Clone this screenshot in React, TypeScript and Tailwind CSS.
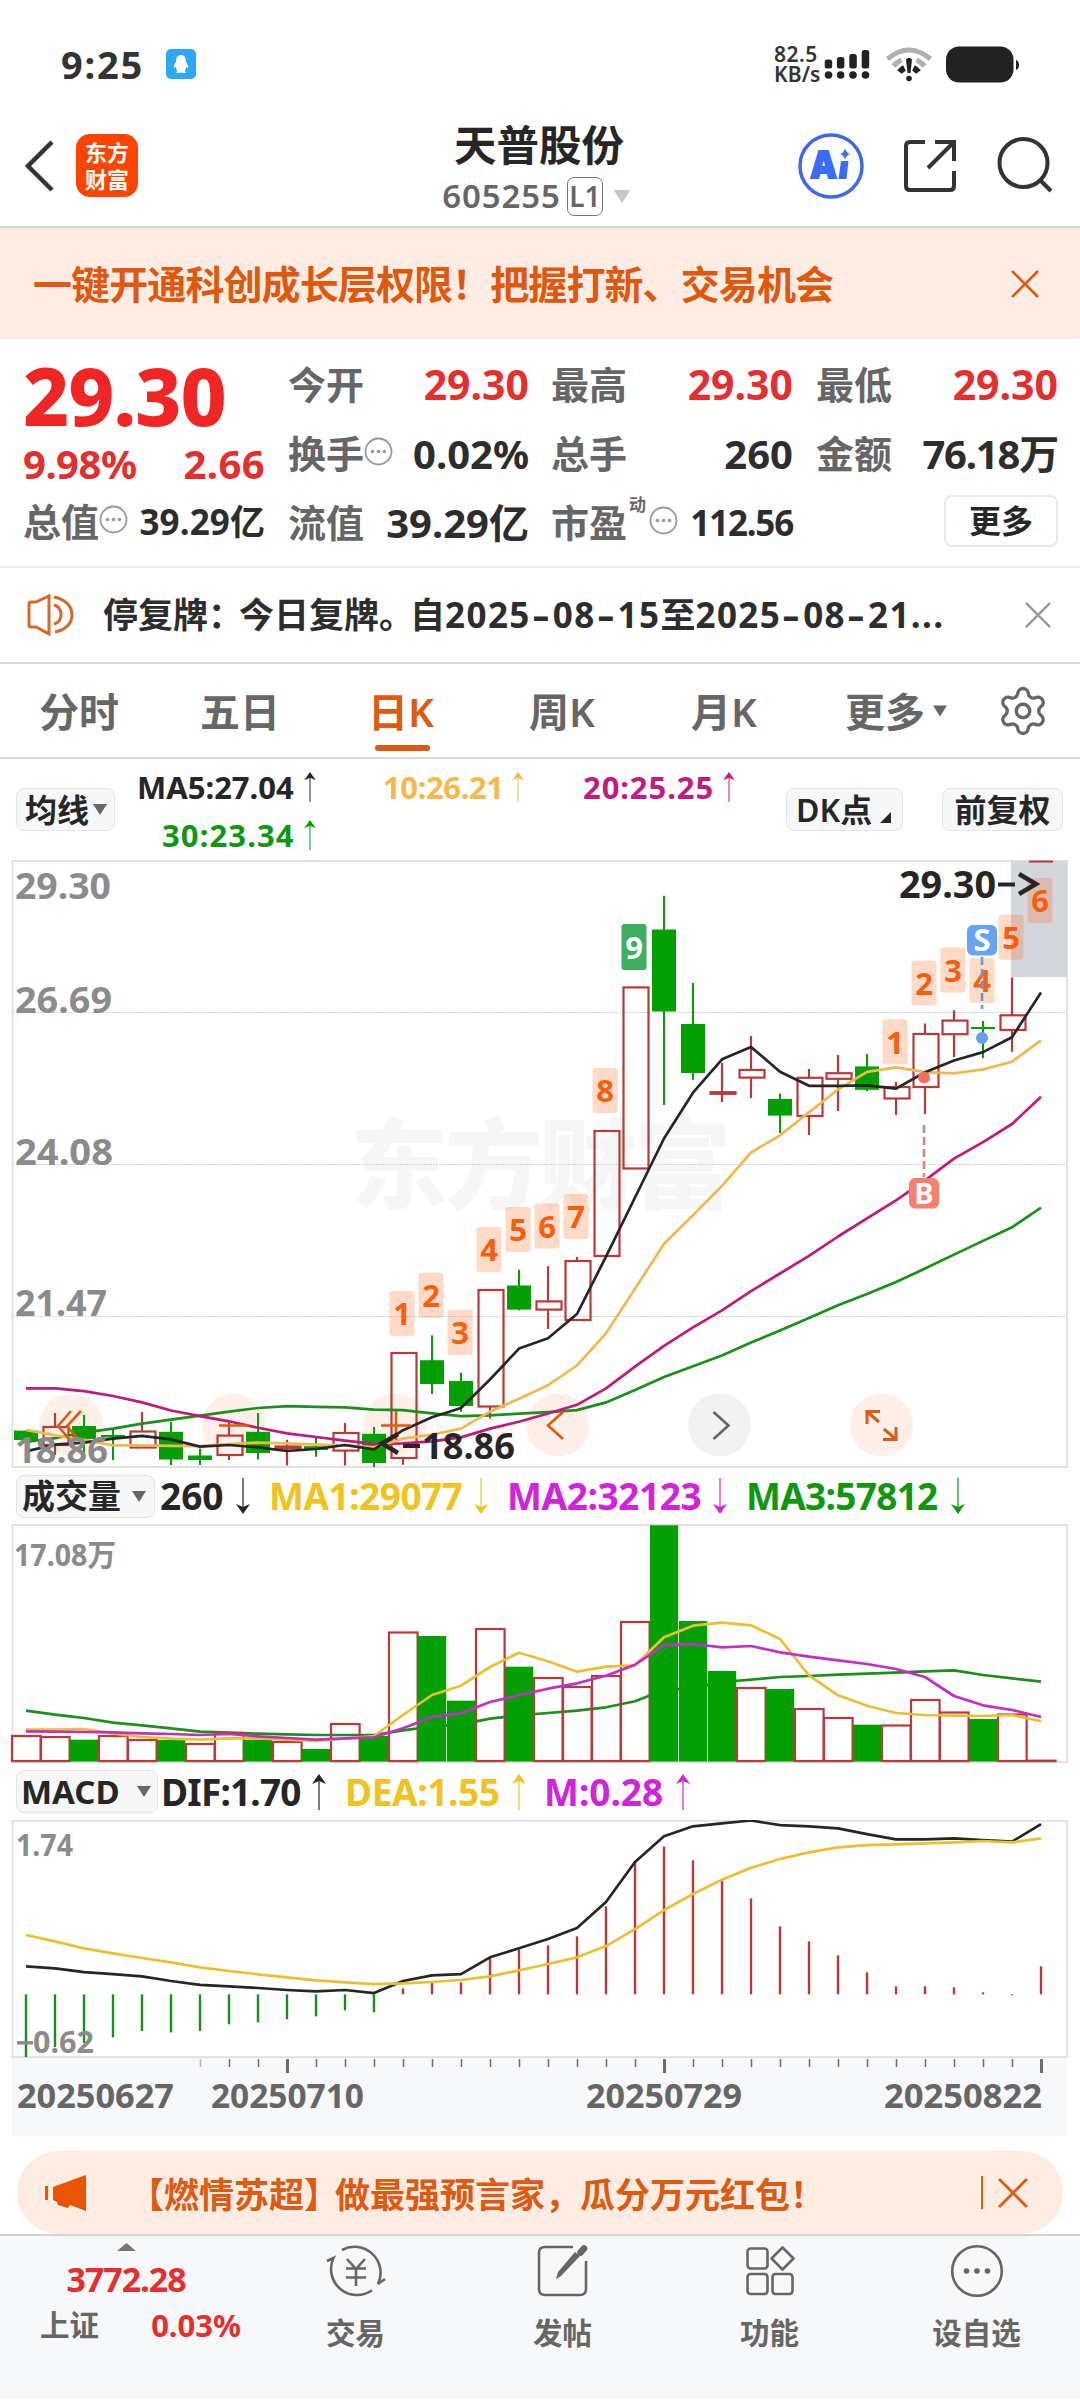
import type { ReactNode } from "react";
import { Settings } from "lucide-react";

const RED = "#b93a38";
const GREEN = "#02a002";

// x centre of the n-th trading day
const cx = (i: number) => 26 + i * 29;

const toPoints = (ys: number[]) => ys.map((y, i) => `${cx(i)},${y}`).join(" ");

// [up, high, body top, body bottom, low]
const candles: [number, number, number, number, number][] = [
  [0, 1430.6, 1430.6, 1440, 1440],
  [1, 1413, 1427, 1445, 1455],
  [0, 1415, 1426, 1439, 1455],
  [0, 1428.5, 1435, 1437.5, 1460],
  [1, 1412, 1431.5, 1447.5, 1447.5],
  [0, 1422, 1431.8, 1459.5, 1465],
  [0, 1448.6, 1455.5, 1460, 1465],
  [1, 1420.5, 1435.6, 1455, 1460],
  [0, 1413, 1431.8, 1453, 1459.5],
  [1, 1439.8, 1446.5, 1448.3, 1465.5],
  [0, 1437.4, 1446.2, 1450, 1456.7],
  [1, 1423, 1433, 1450.6, 1465.5],
  [0, 1427, 1433.8, 1463, 1467],
  [1, 1353, 1353, 1458, 1464.7],
  [0, 1335.3, 1360.2, 1384, 1394],
  [0, 1372.7, 1381, 1406, 1411.7],
  [1, 1290, 1290, 1406.5, 1418.5],
  [0, 1269.8, 1285.5, 1309.6, 1310.4],
  [1, 1266.2, 1301.4, 1309.6, 1329],
  [1, 1257, 1261, 1320, 1320],
  [1, 1131, 1131, 1256, 1256],
  [1, 987.4, 987.4, 1168.5, 1168.5],
  [0, 895.8, 929.5, 1011.5, 1105],
  [0, 983, 1024, 1073, 1079.8],
  [1, 1063, 1092.2, 1093.8, 1102],
  [1, 1036, 1070, 1077.6, 1098],
  [0, 1093.5, 1099, 1115.6, 1133],
  [1, 1069, 1077.8, 1116, 1135],
  [1, 1055, 1073.2, 1078.8, 1111],
  [0, 1054, 1066.4, 1089.8, 1091],
  [1, 1081.8, 1087, 1098.5, 1115],
  [1, 1023.6, 1034, 1087, 1114],
  [1, 1010.3, 1020.6, 1034.2, 1057],
  [0, 1021, 1027, 1029, 1058],
  [1, 977.4, 1015.3, 1030, 1051.7],
];

const ma5 = [1451.4, 1444.6, 1442.6, 1438.6, 1435.8, 1439.4, 1446.6, 1445, 1447.4, 1451, 1449, 1445, 1449.4, 1430.2, 1417.3, 1408, 1379.5, 1348.6, 1338.2, 1314, 1256.6, 1197.5, 1138.5, 1092.7, 1059.3, 1046.9, 1071.8, 1085.8, 1085.8, 1085.4, 1088.6, 1072.2, 1060.5, 1052.1, 1037.2, 992.6];
const ma10 = [1429.8, 1435.4, 1439.8, 1445.4, 1445.4, 1445.8, 1446.2, 1444.2, 1442.6, 1443.4, 1444.6, 1445.4, 1447.4, 1438.6, 1434.6, 1428.6, 1411.7, 1398.8, 1385.2, 1365.5, 1333.3, 1288.7, 1243.7, 1215.2, 1185.9, 1152.5, 1135.3, 1112.4, 1089.5, 1071.8, 1067.4, 1072.2, 1073.4, 1069.4, 1061.7, 1040.4];
const ma20 = [1388.4, 1388.4, 1391.2, 1396, 1402.4, 1410.5, 1416.1, 1421.3, 1427.7, 1433.4, 1437, 1440.6, 1443.8, 1443.4, 1441.4, 1437.4, 1428.6, 1421.7, 1413.5, 1404.8, 1388.4, 1366.7, 1345.8, 1327.3, 1310.4, 1291.1, 1273.5, 1255.8, 1236.5, 1218.4, 1200.3, 1180.3, 1158.6, 1142.1, 1124, 1096.7];
const ma30 = [1442, 1438.2, 1432.6, 1428.6, 1423.7, 1419.7, 1415.7, 1411.7, 1408, 1406.1, 1406.9, 1407.3, 1409.7, 1410.1, 1413.3, 1416.1, 1415.3, 1413.7, 1412.1, 1410.1, 1402.4, 1390, 1377.1, 1366.3, 1355.4, 1342.6, 1330.5, 1318.1, 1305.2, 1294, 1281.9, 1268.6, 1254.6, 1240.9, 1227.3, 1207.6];

// [x centre, top, label]
const tags: [number, number, string][] = [
  [402, 1291, "1"],
  [431, 1272.7, "2"],
  [460, 1310, "3"],
  [489, 1227, "4"],
  [518, 1207, "5"],
  [547, 1203.6, "6"],
  [576, 1194, "7"],
  [605, 1068, "8"],
  [895, 1019.5, "1"],
  [924, 960.5, "2"],
  [953, 947.6, "3"],
  [982, 958, "4"],
  [1011, 914.7, "5"],
  [1040, 878, "6"],
];

// [up, top]
const volumes: [number, number][] = [
  [1, 1736], [1, 1737], [0, 1739.7], [1, 1736], [1, 1740], [0, 1740], [1, 1744], [1, 1733], [0, 1739.7],
  [1, 1742], [0, 1749], [1, 1724], [0, 1736], [1, 1632.5], [0, 1636], [0, 1700.7], [1, 1629], [0, 1666.7],
  [1, 1678], [1, 1687], [1, 1676], [1, 1622], [0, 1525.3], [0, 1621], [0, 1671], [1, 1688], [0, 1689],
  [1, 1709], [1, 1718], [0, 1724.7], [1, 1725.5], [1, 1700], [1, 1712.5], [0, 1719], [1, 1714.5], [1, 1760.7],
];
const vma1 = [1729.7, 1729.7, 1729, 1733.3, 1737, 1738.7, 1739.7, 1738.3, 1738.3, 1739.7, 1741, 1738.7, 1736, 1715, 1695, 1685.7, 1667, 1652.7, 1661.3, 1671.7, 1666.7, 1665.3, 1637.3, 1625.7, 1622.7, 1625.3, 1639, 1675.3, 1695.3, 1705.7, 1713, 1715, 1715.7, 1716, 1715, 1721.3];
const vma2 = [1731.3, 1731.7, 1732, 1732.3, 1733.3, 1734, 1735, 1734, 1736.3, 1738, 1739.7, 1738.3, 1737.3, 1728.3, 1717, 1713.3, 1702, 1695.3, 1688.7, 1683.3, 1675.7, 1664.7, 1645.3, 1644, 1647.3, 1646, 1652.3, 1656.7, 1660.3, 1664, 1669, 1677, 1696, 1705.3, 1710, 1717];
const vma3 = [1710.7, 1714.7, 1718, 1722.7, 1725.3, 1728.3, 1731.7, 1732.7, 1733.7, 1734.3, 1735, 1735, 1735, 1730.3, 1726.7, 1724.3, 1718.7, 1715.3, 1713, 1710.7, 1707.3, 1701.3, 1690, 1688, 1682, 1679.7, 1677, 1676, 1674.7, 1673.7, 1672.7, 1671.3, 1670.3, 1675, 1678.3, 1681.7];

const MACD_ZERO = 1996.5;
const macd = [2060, 2049.8, 2045.7, 2040, 2033.6, 2035, 2033.6, 2026.8, 2024.8, 2021.8, 2018.8, 2012.7, 2014.7, 1990.5, 1984, 1984.4, 1959.8, 1951, 1947, 1937.9, 1907.6, 1862, 1847, 1861, 1882, 1899.5, 1927.8, 1943, 1957, 1974.3, 1988.4, 1988.4, 1989.4, 1994.5, 1997.4, 1968.2];
const dif = [1968.2, 1970.2, 1974, 1976, 1978.3, 1983, 1987, 1988.4, 1990.1, 1992.1, 1993.5, 1992.1, 1995.2, 1983, 1977.3, 1976, 1959.1, 1950, 1940.6, 1929.5, 1903.2, 1862.8, 1836.8, 1826.7, 1823.7, 1820.8, 1825.4, 1826.7, 1828.7, 1834.5, 1839.9, 1839.9, 1838.8, 1840.5, 1842.2, 1824.4];
const dea = [1936.5, 1943, 1950, 1955.1, 1959.8, 1964.2, 1969.2, 1972.9, 1976.3, 1979.3, 1982.4, 1984.4, 1986.1, 1985.4, 1984, 1982, 1978.3, 1972.3, 1965.9, 1959.1, 1947.7, 1930.5, 1911.3, 1895.1, 1880.6, 1868.5, 1859.7, 1853, 1847.9, 1845.6, 1844.9, 1843.9, 1842.9, 1841.5, 1842.9, 1838.8];

function Line({ ys, color }: { ys: number[]; color: string }) {
  return <polyline points={toPoints(ys)} fill="none" stroke={color} strokeWidth="2.7" strokeLinejoin="round" />;
}

function Label({ x, y, w, size, fill = "#8b8b8b", children }: { x: number; y: number; w: number; size: number; fill?: string; children: string }) {
  return (
    <text x={x} y={y} textLength={w} lengthAdjust="spacingAndGlyphs" fontSize={size} fill={fill}>
      {children}
    </text>
  );
}

function Caret({ className }: { className: string }) {
  return (
    <svg viewBox="0 0 14 11" className={className} fill="currentColor">
      <path d="M0 0H14L7 11Z" />
    </svg>
  );
}

function Arrow({ down, className = "" }: { down?: boolean; className?: string }) {
  return (
    <svg viewBox="0 0 14 36" className={`shrink-0 ${down ? "rotate-180" : ""} ${className}`}>
      <path d="M7 5V36" stroke="currentColor" strokeWidth="1.6" opacity="0.75" />
      <path d="M7 0L14 10L7 7L0 10Z" fill="currentColor" />
    </svg>
  );
}

function Cross({ size, className = "" }: { size: number; className?: string }) {
  return (
    <svg width={size} height={size} viewBox="0 0 28 28" className={className} fill="none" stroke="currentColor" strokeWidth="2.6">
      <path d="M1 1L27 27M27 1L1 27" />
    </svg>
  );
}

function Info() {
  return (
    <svg width="29" height="29" viewBox="0 0 29 29" className="-mt-1 shrink-0">
      <circle cx="14.5" cy="14.5" r="13" fill="none" stroke="#999" strokeWidth="1.8" />
      <g fill="#999">
        <circle cx="8.5" cy="14.5" r="1.8" />
        <circle cx="14.5" cy="14.5" r="1.8" />
        <circle cx="20.5" cy="14.5" r="1.8" />
      </g>
    </svg>
  );
}

function Cell({ label, value, info, sup, valueClass }: { label: string; value: string; info?: boolean; sup?: string; valueClass: string }) {
  return (
    <div className="flex h-[69px] items-center justify-between">
      <div className="flex items-center text-[38px] font-semibold leading-[69px] text-[#666]">
        {label}
        {sup && <span className="-mt-9 ml-0.5 w-5 text-[17px] leading-5">{sup}</span>}
        {info && <Info />}
      </div>
      <span className={`whitespace-nowrap font-bold leading-[69px] ${valueClass}`}>{value}</span>
    </div>
  );
}

const UP = "text-[41px] text-[#e62e2e]";
const PLAIN = "text-[40px] text-[#2d2d2d]";

function StatusBar() {
  return (
    <div className="flex h-[110px] items-start text-[#333]">
      <span className="ml-[61px] mt-[43px] w-[105px] text-[38px] font-bold leading-[42px] tracking-[1.8px]">9:25</span>
      <svg width="30" height="30" viewBox="0 0 30 30" className="mt-[49px]">
        <rect width="30" height="30" rx="5" fill="#2ba7fb" />
        <path d="M15 6C10.5 6 10 10 10 13C8.5 15 7.5 17 8 19L10 18C10 20 11 21 11 22L10 24H14L15 23L16 24H20L19 22C19 21 20 20 20 18L22 19C22.5 17 21.5 15 20 13C20 10 19.5 6 15 6Z" fill="#fff" />
      </svg>
      <div className="ml-[578px] mt-[44px] w-[48px] text-[21px] font-semibold leading-[20px]">
        <div className="tracking-[0.5px]">82.5</div>
        <div className="tracking-[0.1px]">KB/s</div>
      </div>
      <svg width="200" height="40" viewBox="822 45 200 40" className="mt-[45px]" fill="#222">
        <rect x="824.7" y="59.5" width="7.5" height="9" rx="2.5" />
        <rect x="836.9" y="57" width="7.5" height="11.5" rx="2.5" />
        <rect x="849.3" y="54" width="7.5" height="14.5" rx="2.5" />
        <rect x="861.7" y="50" width="7.5" height="18.5" rx="2.5" />
        <circle cx="828.5" cy="75" r="3.8" />
        <circle cx="840.6" cy="75" r="3.8" />
        <circle cx="853" cy="75" r="3.8" />
        <circle cx="865.5" cy="75" r="3.8" />
        <g fill="none" strokeWidth="5">
          <path d="M887.5 59Q909 41 930.5 59" stroke="#b0b0b0" />
          <path d="M893.5 66Q897 62 901.5 60M916.5 60Q921 62 924.5 66" stroke="#b0b0b0" />
          <path d="M899.5 72Q901.5 69.5 904.5 68M913.5 68Q916.5 69.5 918.5 72" stroke="#222" strokeWidth="6" />
        </g>
        <path d="M906 59.5Q909 56 912 59.5L910.5 73H907.5Z" />
        <circle cx="909" cy="78.5" r="2.8" />
        <rect x="946" y="46.5" width="67.5" height="36" rx="13" />
        <path d="M1016 60Q1019 61 1019 65T1016 70Z" />
      </svg>
    </div>
  );
}

function Header() {
  return (
    <div className="flex h-[118px] border-b-2 border-[#d6d6d8]">
      <svg width="30" height="52" viewBox="0 0 30 52" className="ml-[24px] mt-[30px]" fill="none" stroke="#333" strokeWidth="4.5">
        <path d="M28 2L4 26L28 50" />
      </svg>
      <div className="ml-[22px] mt-[24px] flex h-[63px] w-[62px] flex-col items-center justify-center rounded-[14px] bg-[#ff4400] text-[22px] font-bold leading-[27px] text-white">
        <span>东方</span>
        <span>财富</span>
      </div>
      <div className="ml-[261px] mt-[9px] flex w-[280px] flex-col items-center">
        <h1 className="text-[42.5px] font-bold leading-[52px] text-[#262626]">天普股份</h1>
        <div className="mt-[5px] flex h-[40px] items-center text-[#666]">
          <span className="-ml-[4px] text-[33px] font-semibold leading-[40px] tracking-[0.9px]">605255</span>
          <span className="ml-[6px] flex h-[39px] w-[36px] items-center justify-center rounded-[7px] border-[1.5px] border-[#777] text-[28px] font-semibold leading-[36px]">L1</span>
          <Caret className="ml-[9px] h-[13px] w-[20px] text-[#c8c8c8]" />
        </div>
      </div>
      <svg width="266" height="70" viewBox="794 130 266 70" className="ml-[115px] mt-[20px]" fill="none" stroke="#333" strokeWidth="4">
        <circle cx="831" cy="166" r="31" stroke="#4169e1" strokeWidth="3.5" />
        <text x="811" y="177.5" fontSize="37" fontWeight="900" textLength="25" lengthAdjust="spacingAndGlyphs" fill="#3b6cf8" stroke="#3b6cf8" strokeWidth="2">A</text>
        <path d="M841 161H848.5L846.5 179H838.5Z" fill="#3b6cf8" stroke="none" />
        <path d="M845 148Q846 153 850 154Q846 155 845 160Q844 155 840 154Q844 153 845 148Z" fill="#3b6cf8" stroke="none" />
        <path d="M925 142H910Q906 142 906 146V186Q906 190 910 190H950Q954 190 954 186V171" />
        <path d="M935 142H954V161M954 142L928 168" />
        <circle cx="1023.5" cy="163" r="24" />
        <path d="M1040 180L1051 191" />
      </svg>
    </div>
  );
}

function Quote() {
  return (
    <div className="flex h-[229px] border-b-2 border-[#eee] pl-[23px]">
      <div className="w-[242px] pt-[21px]">
        <div className="text-[80px] font-extrabold leading-[70px] tracking-[-1px] text-[#f22525]">29.30</div>
        <div className="flex h-[67px] justify-between text-[40px] font-bold leading-[67px] text-[#e62e2e]">
          <span className="tracking-[-0.5px]">9.98%</span>
          <span className="tracking-[0.4px]">2.66</span>
        </div>
        <div className="-mt-[10px]">
          <Cell label="总值" value="39.29亿" info valueClass="text-[35px] text-[#2d2d2d] tracking-[0.1px]" />
        </div>
      </div>
      <div className="ml-[23px] w-[241px] pt-[11px]">
        <Cell label="今开" value="29.30" valueClass={UP} />
        <Cell label="换手" value="0.02%" info valueClass={PLAIN} />
        <Cell label="流值" value="39.29亿" valueClass={PLAIN} />
      </div>
      <div className="ml-[22px] w-[242px] pt-[11px]">
        <Cell label="最高" value="29.30" valueClass={UP} />
        <Cell label="总手" value="260" valueClass={PLAIN} />
        <Cell label="市盈" value="112.56" sup="动" info valueClass="text-[35px] text-[#2d2d2d] tracking-[-1.2px]" />
      </div>
      <div className="ml-[23px] w-[242px] pt-[11px]">
        <Cell label="最低" value="29.30" valueClass={UP} />
        <Cell label="金额" value="76.18万" valueClass="text-[40px] text-[#2d2d2d] tracking-[-1.2px]" />
        <div className="ml-auto mt-[7px] flex h-[52px] w-[114px] items-center justify-center rounded-lg border-2 border-[#e8e8e8] text-[32px] font-semibold text-[#262626]">更多</div>
      </div>
    </div>
  );
}

function Dash() {
  return <span className="inline-block w-[22px] scale-x-150 text-center">-</span>;
}

function Notice() {
  return (
    <div className="flex h-[96px] items-center border-b-2 border-[#d9d9db] pl-[27px] text-[#2d2d2d]">
      <svg width="48" height="42" viewBox="0 0 48 42" fill="none" stroke="#d4692a" strokeWidth="3">
        <path d="M2 10Q2 8 4 8H9L22 2V40L9 33H4Q2 33 2 31Z" />
        <path d="M27 11Q34 13 34 20.5Q34 28 27 30M27 3C38 5 45 12 45 21S38 36 28 38" />
      </svg>
      <div className="ml-[28px] w-[922px] whitespace-nowrap text-[35px] font-bold leading-[44px]">
        停复牌<span className="-mr-[4px]">：</span>今日复牌<span className="-mr-[4px]">。</span>自
        <span className="tracking-[1.4px]">2025<Dash />08<Dash />15</span>至<span className="tracking-[1.4px]">2025<Dash />08<Dash />21...</span>
      </div>
      <Cross size={26} className="text-[#999]" />
    </div>
  );
}

function Tabs() {
  return (
    <div className="flex h-[95px] items-start border-b-2 border-[#d9d9db] pt-[24px] text-[40px] font-semibold leading-[48px] text-[#666]">
      <span className="ml-[39px] w-[161px]">分时</span>
      <span className="w-[168px]">五日</span>
      <div className="flex w-[161px] flex-col text-[#dd5a10]">
        <span>日K</span>
        <span className="ml-[7px] mt-[9px] h-[6px] w-[55px] rounded-full bg-[#dd5a10]" />
      </div>
      <span className="w-[162px]">周K</span>
      <span className="w-[154px]">月K</span>
      <span>更多</span>
      <Caret className="ml-[8px] mt-[17px] h-[12px] w-[14px]" />
      <Settings size={54} strokeWidth={1.5} className="-mt-[4px] ml-[49px]" />
    </div>
  );
}

function Pill({ className, children }: { className: string; children: ReactNode }) {
  return (
    <div className={`flex h-[43px] shrink-0 items-center whitespace-nowrap rounded-[8px] border-[1.5px] border-[#e2e4e7] bg-[#f6f7f9] font-semibold leading-[40px] text-[#262626] ${className}`}>
      {children}
    </div>
  );
}

function MaLegend() {
  return (
    <div className="flex h-[101px] text-[31px] font-bold leading-[40px]">
      <Pill className="ml-[16px] mt-[29px] w-[99px] pl-[8px] text-[32px]">
        均线
        <Caret className="ml-[4px] h-[11px] w-[14px] text-[#666]" />
      </Pill>
      <div className="ml-[22px] mt-[8px] w-[650px]">
        <div className="flex h-[48px]">
          <div className="flex w-[246px] text-[#262626]">
            <span className="w-[167px]">MA5:27.04</span>
            <Arrow className="mt-[5px] h-[30px] w-[12px]" />
          </div>
          <div className="flex w-[200px] text-[#f3ba4b]">
            <span className="w-[129px] tracking-[-0.4px]">10:26.21</span>
            <Arrow className="mt-[5px] h-[30px] w-[12px]" />
          </div>
          <div className="flex text-[#c4197f]">
            <span className="w-[140px] tracking-[0.9px]">20:25.25</span>
            <Arrow className="mt-[5px] h-[30px] w-[12px]" />
          </div>
        </div>
        <div className="flex pl-[25px] text-[#0f980f]">
          <span className="w-[142px] tracking-[1.1px]">30:23.34</span>
          <Arrow className="mt-[5px] h-[30px] w-[12px]" />
        </div>
      </div>
      <Pill className="-ml-[1px] mt-[29px] w-[117px] pl-[9px] text-[32px]">
        DK点
        <svg viewBox="0 0 11 11" className="ml-[8px] mt-[16px] h-[11px] w-[11px]">
          <path d="M11 0V11H0Z" fill="#262626" />
        </svg>
      </Pill>
      <Pill className="ml-[39px] mt-[29px] w-[121px] justify-center text-[32px]">前复权</Pill>
    </div>
  );
}

function PriceChart() {
  return (
    <svg width="1080" height="608" viewBox="0 860 1080 608" className="block font-bold">
      <g fill="#f6f6f6" fontSize="98" fontWeight="900">
        <text x="350" y="1201" textLength="382">东方财富</text>
      </g>
      <path d="M13 1012.5H1067M13 1164.5H1067M13 1316.5H1067" stroke="#d4d4d4" strokeWidth="1" strokeDasharray="2 1" />
      <rect x="12.5" y="861" width="1054.5" height="606" fill="none" stroke="#e1e1e1" strokeWidth="2" />
      <rect x="1011" y="861" width="56" height="116" fill="#d3d6db" />
      <path d="M1029 861.5H1053" stroke={RED} strokeWidth="2" />

      {[71.5, 233.5, 395, 558, 881.5].map((x) => (
        <circle key={x} cx={x} cy="1425" r="31.5" fill="#fef0e8" />
      ))}
      <circle cx="719.5" cy="1425" r="31.5" fill="#f2f2f2" />

      {candles.map(([up, high, top, bottom, low], i) =>
        up ? (
          <g key={i} stroke={RED} strokeWidth="2.2">
            <path d={`M${cx(i)} ${high}V${top}M${cx(i)} ${bottom}V${low}`} />
            <rect x={cx(i) - 11.5} y={top} width="25" height={bottom - top} fill="none" />
          </g>
        ) : (
          <g key={i} fill={GREEN}>
            <rect x={cx(i) - 1} y={high} width="2" height={low - high} />
            <rect x={cx(i) - 12} y={top} width="24" height={bottom - top} />
          </g>
        ),
      )}

      {tags.map(([x, y, n]) => (
        <g key={x}>
          <rect x={x - 12.5} y={y} width="25" height="45" rx="3" fill="#fa6a20" fillOpacity="0.25" />
          <text x={x} y={y + 34} fontSize="31" textAnchor="middle" fill="#f95d0d">{n}</text>
        </g>
      ))}
      <rect x="621.5" y="924" width="25" height="46" rx="3" fill="#3eae62" />
      <text x="634" y="959" fontSize="31" textAnchor="middle" fill="#fff">9</text>

      <Line ys={ma30} color="#1b8f1b" />
      <Line ys={ma20} color="#bd1a7c" />
      <Line ys={ma10} color="#f0b94f" />
      <Line ys={ma5} color="#262626" />

      <path d="M982 957V1009" stroke="#6897df" strokeWidth="2.6" strokeDasharray="8 4" />
      <circle cx="982" cy="1038" r="6" fill="#5fa2f0" />
      <rect x="967" y="925" width="30" height="30.5" rx="6" fill="#66a3f7" />
      <text x="982" y="951" fontSize="31" textAnchor="middle" fill="#fff">S</text>
      <path d="M924 1125V1177" stroke="#dd8478" strokeWidth="2.6" strokeDasharray="8 4" />
      <circle cx="924" cy="1077.5" r="6" fill="#fa6e5c" />
      <rect x="909" y="1178" width="30" height="30.5" rx="6" fill="#fa7f6d" />
      <text x="924" y="1203.5" fontSize="29" textAnchor="middle" fill="#fff">B</text>

      <g fill="none" stroke="#dd5a10" strokeWidth="2.6">
        <path d="M71 1411L58 1426L70 1440M81 1411L67 1426L79 1440" />
        <path d="M219 1425.5H249M381 1425.5H411M396 1411V1440" />
        <path d="M563 1412L548 1425.5L563 1439" />
        <path d="M879 1422L867 1411.5M867 1424V1411.5H880M884 1429L896 1439.5M896 1427V1439.5H883" strokeWidth="3" />
      </g>
      <path d="M713.5 1412L728.5 1425.5L713.5 1439" fill="none" stroke="#666" strokeWidth="2.6" />

      <Label x={15} y={899} w={96} size={36}>29.30</Label>
      <Label x={15} y={1013} w={97} size={36}>26.69</Label>
      <Label x={15} y={1165} w={98} size={36}>24.08</Label>
      <Label x={15} y={1316} w={92} size={36}>21.47</Label>
      <Label x={15} y={1463} w={93} size={36}>18.86</Label>
      <Label x={899} y={898} w={97} size={37} fill="#262626">29.30</Label>
      <path d="M998 884.5H1015" stroke="#262626" strokeWidth="4" />
      <path d="M1019 874L1036 884L1019 894" fill="none" stroke="#262626" strokeWidth="4.5" />
      <path d="M398 1434L382 1443.5L398 1453" fill="none" stroke="#262626" strokeWidth="4.5" />
      <path d="M403 1446H420" stroke="#262626" strokeWidth="4" />
      <Label x={422} y={1459} w={93} size={36} fill="#262626">18.86</Label>
    </svg>
  );
}

function VolumeLegend() {
  return (
    <div className="flex h-[56px] items-center text-[37px] font-bold leading-[48px]">
      <Pill className="ml-[16px] w-[139px] pl-[5px] text-[33px]">
        成交量
        <Caret className="ml-[11px] h-[11px] w-[14px] text-[#666]" />
      </Pill>
      <span className="ml-[5px] w-[76px] text-[#262626]">260</span>
      <Arrow down className="h-[36px] w-[14px] text-[#262626]" />
      <div className="ml-[19px] flex items-center text-[#f0c31e]">
        <span className="w-[205px] tracking-[-0.5px]">MA1:29077</span>
        <Arrow down className="h-[36px] w-[14px]" />
      </div>
      <div className="ml-[19px] flex items-center text-[#d222dc]">
        <span className="w-[206px] tracking-[-0.4px]">MA2:32123</span>
        <Arrow down className="h-[36px] w-[14px]" />
      </div>
      <div className="ml-[19px] flex items-center text-[#0e980e]">
        <span className="w-[205px] tracking-[-0.7px]">MA3:57812</span>
        <Arrow down className="h-[36px] w-[14px]" />
      </div>
    </div>
  );
}

function VolumeChart() {
  return (
    <svg width="1080" height="239" viewBox="0 1524 1080 239" className="block font-bold">
      <rect x="12.5" y="1525" width="1054.5" height="237" fill="none" stroke="#e1e1e1" strokeWidth="2" />
      <Line ys={vma3} color="#1b8f1b" />
      {volumes.map(([up, top], i) =>
        up ? (
          <rect key={i} x={12 + i * 29} y={top} width="28.6" height={1761 - top} fill="none" stroke={RED} strokeWidth="2.2" />
        ) : (
          <rect key={i} x={12 + i * 29} y={top} width="28.2" height={1761.5 - top} fill={GREEN} />
        ),
      )}
      <Line ys={vma1} color="#e9c02f" />
      <Line ys={vma2} color="#c030c4" />
      <Label x={14} y={1566} w={102} size={31}>17.08万</Label>
    </svg>
  );
}

function MacdLegend() {
  return (
    <div className="flex h-[57px] items-center text-[37px] font-bold leading-[48px]">
      <Pill className="ml-[16px] w-[142px] pl-[4px] text-[33px]">
        <span className="font-bold">MACD</span>
        <Caret className="ml-auto mr-[6px] h-[11px] w-[14px] text-[#666]" />
      </Pill>
      <div className="ml-[3px] flex items-center text-[#262626]">
        <span className="w-[151px] tracking-[-0.8px]">DIF:1.70</span>
        <Arrow className="h-[36px] w-[14px]" />
      </div>
      <div className="ml-[19px] flex items-center text-[#f0c31e]">
        <span className="w-[167px] tracking-[-0.4px]">DEA:1.55</span>
        <Arrow className="h-[36px] w-[14px]" />
      </div>
      <div className="ml-[18px] flex items-center text-[#d222dc]">
        <span className="w-[132px]">M:0.28</span>
        <Arrow className="h-[36px] w-[14px]" />
      </div>
    </div>
  );
}

function MacdChart() {
  return (
    <svg width="1080" height="317" viewBox="0 1820 1080 317" className="block font-bold">
      <rect x="12" y="2058" width="1055" height="78" fill="#f7f8fa" />
      <g transform="translate(0 19.2) scale(1 0.9893)">
        <rect x="12.5" y="1821" width="1054.5" height="239" fill="none" stroke="#e1e1e1" strokeWidth="2" />
        {macd.map((y, i) => (
          <path key={i} d={`M${cx(i)} ${MACD_ZERO}V${y}`} stroke={y > MACD_ZERO ? "#1b8f1b" : RED} strokeWidth="2.4" />
        ))}
        <Line ys={dif} color="#262626" />
        <Line ys={dea} color="#e9c02f" />
        <Label x={16} y={1857} w={57} size={31}>1.74</Label>
        <path d="M17 2045.5H33" stroke="#8b8b8b" strokeWidth="3.5" />
        <Label x={33} y={2056} w={61} size={31}>0.62</Label>
        {macd.map((_, i) => {
          const major = i === 9 || i === 22 || i === 35;
          return i < 6 ? null : (
            <path key={i} d={`M${cx(i) + 0.5} 2062V${major ? 2076 : 2070}`} stroke={i === 6 ? "#b5b5b5" : "#6b6b6b"} strokeWidth={major ? 3 : 1.5} />
          );
        })}
        <Label x={17} y={2111} w={157} size={34} fill="#666">20250627</Label>
        <Label x={211} y={2111} w={153} size={34} fill="#666">20250710</Label>
        <Label x={586} y={2111} w={156} size={34} fill="#666">20250729</Label>
        <Label x={884} y={2111} w={158} size={34} fill="#666">20250822</Label>
      </g>
    </svg>
  );
}

function PromoBar() {
  return (
    <div className="h-[97px] pt-[14px]">
      <div className="mx-[17px] flex h-[83px] items-center rounded-full bg-[#fcece2] pl-[27px] text-[#dd5a10]">
        <svg width="44" height="38" viewBox="0 0 44 38" fill="#ea5504">
          <path d="M1 12H4V26H1ZM9 13L28 6L42 1V37L26 31L24 34L14 31L13 28L9 26Z" />
        </svg>
        <span className="ml-[41px] mt-[4px] w-[852px] whitespace-nowrap text-[35px] font-bold leading-[48px]">
          【燃情苏超<span className="-mr-[4px]">】</span>做最强预言家，瓜分万元红包！
        </span>
        <span className="h-[33px] w-[1.5px] bg-[#dd5a10]" />
        <Cross size={30} className="ml-[15px]" />
      </div>
    </div>
  );
}

const navItems: { label: string; icon: ReactNode }[] = [
  {
    label: "交易",
    icon: (
      <path d="M16 9A26 26 0 0 1 52 43L59 38M46 49.3A26 26 0 0 1 7.5 17L1 20M21 18L30 28L39 18M20 27.5H40M20 36.5H40M30 28V45" />
    ),
  },
  {
    label: "发帖",
    icon: (
      <>
        <path d="M40 6H12Q6 6 6 12V48Q6 54 12 54H47Q53 54 53 48V20" />
        <path d="M23 38L25 31L42 11L47 15L28 35Z" fill="#666" stroke="none" />
        <path d="M47.5 11.5L51 7.5" strokeWidth="6.5" strokeLinecap="round" />
      </>
    ),
  },
  {
    label: "功能",
    icon: (
      <>
        <rect x="7.5" y="7.5" width="20" height="20" rx="3" />
        <rect x="7.5" y="33" width="20" height="20" rx="3" />
        <rect x="32.5" y="33" width="20" height="20" rx="3" />
        <path d="M42.5 6.5L53.5 17.5L42.5 28.5L31.5 17.5Z" strokeLinejoin="round" />
      </>
    ),
  },
  {
    label: "设自选",
    icon: (
      <>
        <circle cx="30" cy="30" r="24.8" />
        <g fill="#666" stroke="none">
          <circle cx="19.5" cy="30" r="2.8" />
          <circle cx="30" cy="30" r="2.8" />
          <circle cx="40.5" cy="30" r="2.8" />
        </g>
      </>
    ),
  },
];

function BottomNav() {
  return (
    <div className="flex h-[165px] border-t-2 border-[#d4d4d6] bg-[#f7f8fa]">
      <div className="flex w-[252px] flex-col items-center">
        <svg width="19" height="8" viewBox="0 0 19 8" className="mt-[7px]">
          <path d="M9.5 0L19 8H0Z" fill="#777" />
        </svg>
        <span className="mt-[8px] text-[34px] font-bold leading-[40px] tracking-[-1px] text-[#e62e2e]">3772.28</span>
        <div className="mt-[8px] flex w-[200px] items-center justify-between leading-[36px]">
          <span className="ml-[14px] text-[29.5px] font-semibold text-[#666]">上证</span>
          <span className="mr-[-15px] text-[31px] font-bold text-[#e62e2e]">0.03%</span>
        </div>
      </div>
      {navItems.map((item) => (
        <div key={item.label} className="flex w-[207px] flex-col items-center pt-[5px]">
          <svg width="60" height="60" viewBox="0 0 60 60" fill="none" stroke="#666" strokeWidth="2.6">
            {item.icon}
          </svg>
          <span className="mt-[12px] text-[29.5px] font-semibold leading-[40px] text-[#666]">{item.label}</span>
        </div>
      ))}
    </div>
  );
}

export default function App() {
  return (
    <div className="h-[2400px] w-[1080px] overflow-hidden bg-white font-['Noto_Sans','Noto_Sans_CJK_SC',sans-serif]">
      <StatusBar />
      <Header />
      <div className="flex h-[111px] items-center bg-[#fcece3] pl-[33px] text-[#e0580c]">
        <span className="w-[978px] whitespace-nowrap text-[39px] font-bold leading-[48px] tracking-[-0.9px]">
          一键开通科创成长层权限！把握打新、交易机会
        </span>
        <Cross size={28} />
      </div>
      <Quote />
      <Notice />
      <Tabs />
      <MaLegend />
      <PriceChart />
      <VolumeLegend />
      <VolumeChart />
      <MacdLegend />
      <MacdChart />
      <PromoBar />
      <BottomNav />
    </div>
  );
}
